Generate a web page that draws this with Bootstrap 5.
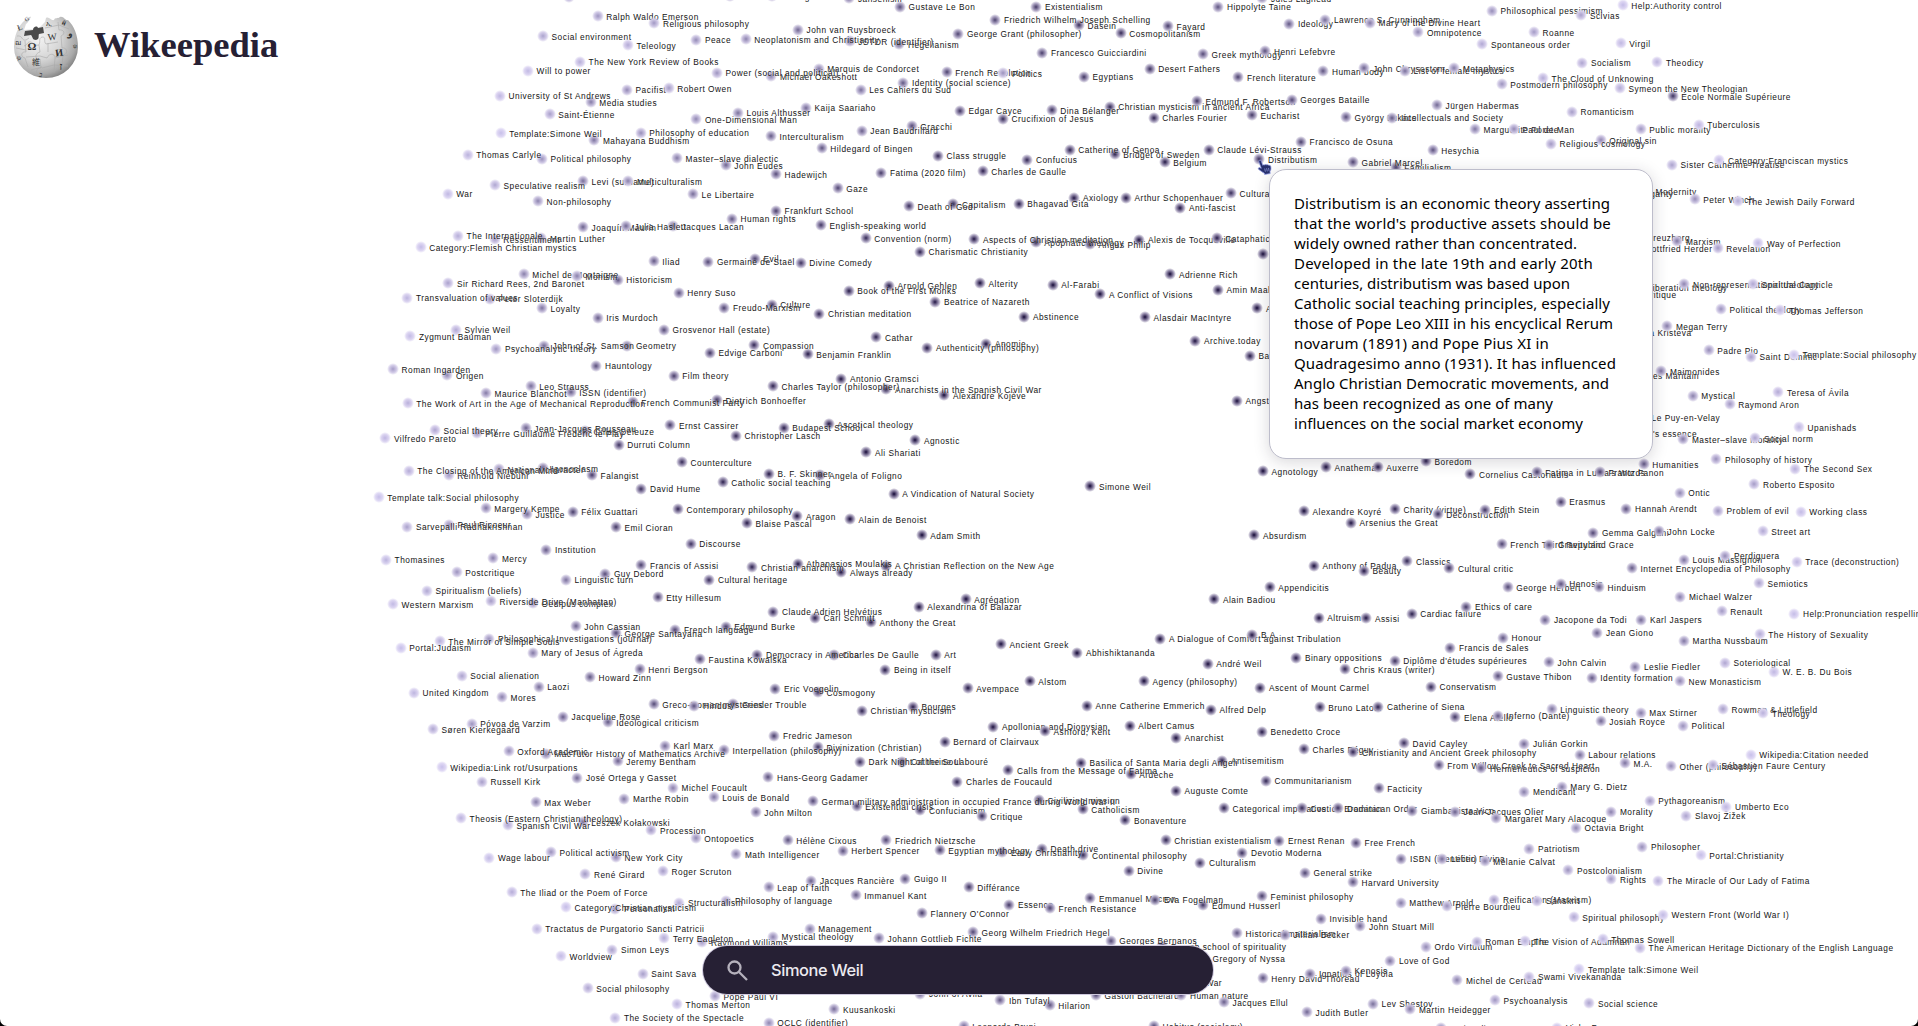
<!DOCTYPE html>
<html lang="en">
<head>
<meta charset="utf-8">
<meta name="viewport" content="width=device-width, initial-scale=1">
<title>Wikeepedia</title>
<link href="https://cdn.jsdelivr.net/npm/bootstrap@5.3.0/dist/css/bootstrap.min.css" rel="stylesheet">
<style>
  body { background: #000; }
  .graph-stage { background: #fff; border-radius: 0 0 7px 7px; }
  .node { position: absolute; display: flex; align-items: center; height: 12px; margin: -6px 0 0 -6px; white-space: nowrap; }
  .node-dot { flex: none; width: 12px; height: 12px; border-radius: 50%;
    background: radial-gradient(circle closest-side, var(--tone) 10%, var(--soft) 62%, rgba(255,255,255,.15) 100%); }
  .node-name { margin-left: 2.6px; padding-top: 1.4px; font: 8.3px/10px "Liberation Sans", sans-serif; letter-spacing: .52px; color: #141414;
    text-shadow: 0 0 1.5px #fff; }
  .brand { padding: 14px 0 0 14px; }
  .brand-name { font: bold 36.6px/44px "Liberation Serif", serif; color: #262034; margin: -4px 0 0 15px; }
  .summary { position: absolute; left: 1269px; top: 169px; width: 384px; height: 290px; padding: 23px 0 0 24px; border-radius: 17px;
    border: 1px solid #bdbdcb; box-shadow: 0 3px 16px rgba(38,32,52,.18); background: #fff; color: #000;
    font: 15px/20px "Noto Sans", sans-serif; white-space: nowrap; }
  .summary span { display: block; }
  .pointer { position: absolute; left: 1256px; top: 158px; }
  .search-bar { height: 48px; width: 510px; background: #262034; border-radius: 24px; margin: 0 0 32px 703px; padding-left: 24px; box-shadow: 0 0 0 1px #cfc9de; }
  .search-bar input { background: none; border: 0; outline: 0; color: #eceaf0; font: 500 16.4px/20px Inter, sans-serif; letter-spacing: -.4px; margin-left: 23px; padding: 0; }
</style>
</head>
<body class="vh-100 overflow-hidden">
<main class="graph-stage position-relative d-flex flex-column justify-content-between vh-100 w-100 overflow-hidden">
  <div id="nodes" class="position-absolute top-0 start-0"></div>

  <header class="brand d-flex align-items-center align-self-start position-relative">
    <svg width="65" height="66" viewBox="0 0 65 66" aria-label="Puzzle globe">
      <defs>
        <radialGradient id="globe" cx=".38" cy=".35" r=".72">
          <stop offset="0" stop-color="#f4f4f4"/><stop offset=".5" stop-color="#d5d5d5"/><stop offset=".82" stop-color="#a9a9a9"/><stop offset="1" stop-color="#777"/>
        </radialGradient>
      </defs>
      <path fill="url(#globe)" d="M17 3c-2-1-4 2-6 3C4 12 0 22 0 33a32 31 0 0 0 64 0C64 21 60 12 54 6c-3 1-4-4-8-3-2 2-5 0-6 3-3 1-5-4-8-2l-1 4-5 5-7 2-9 1 2-6c2-1 3-4 5-7Z"/>
      <path fill="#4b4b4b" d="M11 17l8-1c0-3 4-5 5-2l5-1 1 6-5 1c-1 2 1 5-3 6-4 0-3-3-5-5l-7 1Z"/>
      <g fill="none" stroke="#aaa" stroke-width=".6">
        <path d="M3 22c6-1 4 5 9 4l3-2M10 32c4-1 3-5 7-4 4 2 2 4 8 3 2-5-1-6 3-8 5 0 1 4 4 7l12-2M25 31l1 7c-5 1-6 8 0 7l1 9c-5 0-6 4-2 8M11 27l1 11c-5-1-6 5-1 6l3 9M12 43l14-1 7 2c2-5 8-5 8 0l13-3M44 8l1 8c5-1 7 4 2 6l1 12c6-1 6 7 1 7l-1 12M28 54l12-3 14 1M31 14l14-3 10 4M34 29v9M53 21l8 4M2 34l10 2M17 56l11-3M41 44l-1 15"/>
      </g>
      <g fill="#303030" font-family="Liberation Serif, serif" text-anchor="middle">
        <text x="18" y="36" font-size="11" font-weight="bold">Ω</text>
        <text x="38" y="26" font-size="9.500" transform="rotate(-5 38 22)">W</text>
        <text x="45" y="42" font-size="10" font-weight="bold" transform="rotate(-8 45 38)">И</text>
        <text x="22" y="51" font-size="8" font-family="Noto Sans CJK JP, sans-serif">維</text>
        <text x="47" y="56" font-size="10" font-weight="bold">ז</text>
        <text x="6" y="16" font-size="8" transform="rotate(-22 6 14)">Ł</text>
        <text x="4" y="31" font-size="7">ฌ</text>
        <text x="5" y="46" font-size="7" transform="rotate(22 5 44)">ψ</text>
        <text x="27" y="63" font-size="7" transform="rotate(15 27 60)">ב</text>
        <text x="56" y="22" font-size="9" font-weight="bold" transform="rotate(12 56 20)">و</text>
        <text x="35" y="12" font-size="7">ኢ</text>
        <text x="50" y="11" font-size="7" font-weight="bold" transform="rotate(25 50 9)">й</text>
        <text x="61" y="34" font-size="6">ψ</text>
        <text x="13" y="7" font-size="6" transform="rotate(-35 13 5)">G</text>
      </g>
    </svg>
    <h1 class="brand-name">Wikeepedia</h1>
  </header>

  <aside class="summary" id="summary"></aside>

  <svg class="pointer" width="17" height="18" viewBox="0 0 17 18">
    <path fill="#28306c" stroke="#8f9be6" stroke-width=".7" stroke-linejoin="round" d="M3.300 2.400C4.200 1.800 5 2.300 5.300 3.200L6.800 7.300C7.200 6.500 8.400 6.500 8.800 7.100C9.300 6.400 10.500 6.500 10.900 7C11.500 6.500 12.600 6.700 12.900 7.400C13.800 7.100 14.600 7.700 14.800 8.600C15.300 10.600 14.900 12.300 14 13.600L14.200 15.600L8.600 16.500L8.200 15C6.500 14.300 4.600 12.700 2.700 11.400C1.700 10.500 2.700 9.300 3.900 9.700L5.300 10.300L3 4.300C2.700 3.500 2.700 2.800 3.300 2.400Z"/>
    <path stroke="#98a3e8" stroke-width=".7" d="M8.700 10.500l.7 3.200M10.600 10.200l.7 3.200M12.500 9.900l.6 3.200"/>
  </svg>

  <div class="search-bar d-flex align-items-center position-relative">
    <svg width="21" height="21" viewBox="0 0 21 21" fill="none" stroke="#b5b1bc" stroke-width="2.300"><circle cx="7.500" cy="7.500" r="6"/><path d="M12 12l8 8"/></svg>
    <input type="text" value="Simone Weil" aria-label="Search">
  </div>
</main>

<script src="https://cdn.jsdelivr.net/npm/bootstrap@5.3.0/dist/js/bootstrap.bundle.min.js"></script>
<script>
// The map is stored in sectors: an origin in pixels, then one "x y name" row per article in thirds of a pixel.
const sectors = [
[370, 0, `
597 -11 Pontius Pilate
1080 -12 Nietzsche
1205 -12 Neologism
1437 -7 Jansenism
682 48 Ralph Waldo Emerson
852 68 Religious philosophy
1283 88 John van Ruysbroeck
518 108 Social environment
978 118 Peace
1126 116 Neoplatonism and Christianity
1438 122 JSTOR (identifier)
773 134 Teleology
629 184 The New York Review of Books
473 211 Will to power
1345 205 Marquis de Condorcet
1040 217 Power (social and political)
1203 227 Michael Oakeshott
770 268 Pacifist
895 263 Robert Owen
1471 268 Les Cahiers du Sud
389 286 University of St Andrews
661 305 Media studies
1307 322 Kaija Saariaho
538 341 Saint-Étienne
1103 337 Louis Althusser
978 356 One-Dimensional Man
391 398 Template:Simone Weil
811 397 Philosophy of education
1474 391 Jean Baudrillard
672 419 Mahayana Buddhism
1202 408 Interculturalism
1354 444 Hildegard of Bingen
292 463 Thomas Carlyle
515 475 Political philosophy
920 473 Master–slave dialectic
1066 495 John Eudes
1217 521 Hadewijch
1533 517 Fatima (2020 film)
638 543 Levi (surname)
774 542 Multiculturalism
374 555 Speculative realism
1402 563 Gaze
232 580 War
503 602 Non-philosophy
968 582 Le Libertaire
1217 631 Frankfurt School
1085 655 Human rights
1352 674 English-speaking world
638 680 Joaquín Maurín
767 677 Julia Haslett
908 677 Jacques Lacan
263 706 The Internationale
373 716 Ressentiment
513 713 Martin Luther
1486 713 Convention (norm)
151 740 Category:Flemish Christian mystics
850 783 Iliad
1014 784 Germaine de Staël
1154 775 Evil
1291 787 Divine Comedy
460 821 Michel de Montaigne
620 827 Monism
742 838 Historicism
234 848 Sir Richard Rees, 2nd Baronet
925 877 Henry Suso
1435 871 Book of the First Monks
1556 856 Arnold Gehlen
111 892 Transvaluation of values
359 895 Peter Sloterdijk
515 923 Loyalty
1062 922 Freudo-Marxism
1204 913 Culture
1347 940 Christian meditation
682 952 Iris Murdoch
257 988 Sylvie Weil
881 988 Grosvenor Hall (estate)
120 1008 Zygmunt Bauman
1518 1010 Cathar`],
[880, 0, `
59 19 Gustave Le Bon
468 19 Existentialism
1014 19 Hippolyte Taine
1146 -6 Jules Lagneau
345 58 Friedrich Wilhelm Joseph Schelling
596 75 Dasein
863 78 Fayard
1227 70 Ideology
1335 58 Lawrence S. Cunningham
1469 67 Mary of the Divine Heart
234 100 George Grant (philosopher)
721 98 Cosmopolitanism
57 131 Hegelianism
486 157 Francesco Guicciardini
968 162 Greek mythology
1155 152 Henri Lefebvre
808 205 Desert Fathers
199 216 French Revolution
369 218 Politics
69 247 Identity (social science)
611 229 Egyptians
1074 230 French literature
1329 212 Human body
1452 203 John Chrysostom
950 303 Edmund F. Robertson
1234 298 Georges Bataille
688 319 Christian mysticism in ancient Africa
239 331 Edgar Cayce
514 329 Dina Bélanger
368 355 Crucifixion of Jesus
820 352 Charles Fourier
1115 344 Eucharist
1397 350 György Lukács
1536 352 Intellectuals and Society
94 377 Gracchi
1262 424 Francisco de Osuna
173 466 Class struggle
568 448 Catherine of Genoa
985 448 Claude Lévi-Strauss
441 478 Confucius
703 461 Bridget of Sweden
853 485 Belgium
1137 476 Distributism
1418 485 Gabriel Marcel
1546 500 Familialism
307 512 Charles de Gaulle
86 617 Death of God
219 611 Capitalism
415 610 Bhagavad Gita
582 592 Axiology
737 592 Arthur Schopenhauer
1052 578 Cultural Marxism
900 622 Anti-fascist
282 716 Aspects of Christian meditation
466 725 Apophatic theology
629 732 Angus Philip
777 718 Alexis de Tocqueville
1009 713 Cataphatic theology
119 754 Charismatic Christianity
1149 761 Allegory
870 821 Adrienne Rich
299 848 Alterity
517 853 Al-Farabi
660 881 A Conflict of Visions
1013 868 Amin Maalouf
165 904 Beatrice of Nazareth
1131 924 Aesthetics
432 949 Abstinence
794 950 Alasdair MacIntyre
945 1021 Archive.today`],
[1398, 0, `
673 14 Help:Authority control
281 31 Philosophical pessimism
549 44 Scivias
60 95 Omnipotence
407 95 Roanne
252 131 Spontaneous order
667 128 Virgil
552 187 Socialism
777 185 Theodicy
168 203 Metaphysics
20 211 List of female mystics
434 233 The Cloud of Unknowing
310 251 Postmodern philosophy
665 263 Symeon the New Theologian
823 287 École Normale Supérieure
116 314 Jürgen Habermas
521 334 Romanticism
901 373 Tuberculosis
230 386 Marguerite Porete
346 386 Paul de Man
727 386 Public morality
607 419 Original sin
458 430 Religious cosmology
103 449 Hesychia
963 479 Category:Franciscan mystics
821 493 Sister Catherine Treatise
746 572 Modernity
690 580 Vulgarity
889 596 Peter Winch
1020 602 The Jewish Daily Forward
721 711 Kreuzberg
837 722 Marxism
614 743 Johann Gottfried Herder
958 743 Revelation
1080 728 Way of Perfection
858 851 Non-representational theology
1064 851 Spiritual Canticle
722 860 Liberation theology
711 882 Critique
968 926 Political theology
1146 929 Thomas Jefferson
807 977 Megan Terry
684 995 Julia Kristeva`],
[370, 340, `
378 25 Psychoanalytic theory
521 16 John of St. Samson
771 16 Geometry
1152 14 Compassion
1019 37 Edvige Carboni
1312 41 Benjamin Franklin
68 86 Roman Ingarden
231 104 Origen
678 76 Hauntology
910 106 Film theory
481 137 Leo Strauss
1413 115 Antonio Gramsci
1208 137 Charles Taylor (philosopher)
347 158 Maurice Blanchot
601 155 ISSN (identifier)
1548 147 Anarchists in the Spanish Civil War
112 188 The Work of Art in the Age of Mechanical Reproduction
787 185 French Communist Party
1040 179 Dietrich Bonhoeffer
194 269 Social theory
466 263 Jean-Jacques Rousseau
319 279 Pierre Guillaume Frédéric le Play
644 272 Gilles Deleuze
900 254 Ernst Cassirer
1240 262 Budapest School
1375 251 Ascetical theology
45 293 Vilfredo Pareto
1097 286 Christopher Lasch
745 313 Durruti Column
1488 335 Ali Shariati
935 366 Counterculture
115 391 The Closing of the American Mind
235 405 Reinhold Niebuhr
386 386 National character
517 384 Iconoclasm
665 404 Falangist
1196 400 B. F. Skinner
1350 404 Angela of Foligno
1057 425 Catholic social teaching
813 445 David Hume
25 470 Template talk:Social philosophy
1570 460 A Vindication of Natural Society
346 503 Margery Kempe
470 521 Justice
607 514 Félix Guattari
923 506 Contemporary philosophy
1281 527 Aragon
1130 548 Blaise Pascal
1439 536 Alain de Benoist
111 559 Sarvepalli Radhakrishnan
236 553 Paul Ricoeur
737 560 Emil Cioran
961 610 Discourse
528 628 Institution
47 658 Thomasines
369 653 Mercy
813 674 Francis of Assisi
1146 680 Christian anarchism
1282 670 Athanasios Moulakis
1548 676 A Christian Reflection on the New Age
259 695 Postcritique
705 700 Guy Debord
1413 696 Always already
587 718 Linguistic turn
1017 718 Cultural heritage
170 751 Spiritualism (beliefs)
68 791 Western Marxism
362 782 Riverside Drive (Manhattan)
488 789 Oedipus complex
862 770 Etty Hillesum
1209 814 Claude Adrien Helvétius
1334 832 Carl Schmitt
1502 845 Anthony the Great
616 857 John Cassian
1066 859 Edmund Burke
915 868 French language
737 878 George Santayana
357 895 Philosophical Investigations (journal)
208 902 The Mirror of Simple Souls
91 922 Portal:Judaism
487 937 Mary of Jesus of Ágreda
989 956 Faustina Kowalska
1161 943 Democracy in America
1391 943 Charles De Gaulle
274 1006 Social alienation
808 986 Henri Bergson
1545 988 Being in itself
659 1010 Howard Zinn`],
[880, 340, `
141 22 Authenticity (philosophy)
318 10 Anomie
1109 46 Basilica
192 164 Alexandre Kojève
1070 181 Angst
105 300 Agnostic
1148 392 Agnotology
1337 381 Anathema
1492 380 Auxerre
630 437 Simone Weil
1271 512 Alexandre Koyré
1544 506 Charity (virtue)
1412 547 Arsenius the Great
124 584 Adam Smith
1122 584 Absurdism
1301 676 Anthony of Padua
1451 691 Beauty
1168 740 Appendicitis
1002 776 Alain Badiou
256 777 Agrégation
115 799 Alexandrina of Balazar
1315 832 Altruism
1458 834 Assisi
840 895 A Dialogue of Comfort against Tribulation
1116 883 B.A.
362 911 Ancient Greek
591 937 Abhishiktananda
166 943 Art
982 970 André Weil
1248 952 Binary oppositions
1543 961 Diplôme d'études supérieures
1393 986 Chris Kraus (writer)
448 1022 Alstom
791 1022 Agency (philosophy)`],
[1398, 340, `
931 29 Padre Pio
1058 49 Saint Dominic
1187 43 Template:Social philosophy
789 92 Maimonides
664 104 Jacques Maritain
883 166 Mystical
1140 155 Teresa of Ávila
994 191 Raymond Aron
734 230 Le Puy-en-Velay
1202 260 Upanishads
685 279 Man's essence
855 296 Master–slave morality
1071 293 Social norm
954 356 Philosophy of history
83 363 Boredom
736 371 Humanities
1191 385 The Second Sex
216 401 Cornelius Castoriadis
415 395 Fatima in Lucia's Words
605 395 Frantz Fanon
1068 431 Roberto Esposito
844 457 Ontic
487 484 Erasmus
684 505 Hannah Arendt
118 521 Deconstruction
261 508 Edith Stein
959 511 Problem of evil
1207 514 Working class
585 577 Gemma Galgani
782 572 John Locke
1093 572 Street art
310 611 French Third Republic
453 613 Gravity and Grace
27 662 Classics
153 683 Cultural critic
857 658 Louis Massignon
981 646 Perdiguera
1195 664 Trace (deconstruction)
701 683 Internet Encyclopedia of Philosophy
328 740 George Herbert
487 730 Henosis
602 740 Hinduism
1082 728 Semiotics
846 769 Michael Walzer
40 820 Cardiac failure
204 799 Ethics of care
970 812 Renault
1188 820 Help:Pronunciation respelling key
441 838 Jacopone da Todi
729 838 Karl Jaspers
597 877 Jean Giono
1084 881 The History of Sexuality
314 892 Honour
857 901 Martha Nussbaum
156 922 Francis de Sales
452 965 John Calvin
980 967 Soteriological
711 979 Leslie Fiedler
1127 994 W. E. B. Du Bois
298 1007 Gustave Thibon
580 1012 Identity formation
845 1022 New Monasticism`],
[370, 680, `
505 19 Laozi
131 37 United Kingdom
395 50 Mores
1215 25 Eric Voegelin
1343 35 Cosmogony
850 71 Greco-Roman mysteries
972 76 Hindus
1089 71 Gender Trouble
1475 91 Christian mysticism
578 109 Jacqueline Rose
712 125 Ideological criticism
304 130 Póvoa de Varzim
188 146 Søren Kierkegaard
1212 166 Fredric Jameson
884 196 Karl Marx
415 212 Oxford Academic
526 220 MacTutor History of Mathematics Archive
1061 209 Interpellation (philosophy)
1343 200 Divinization (Christian)
742 243 Jeremy Bentham
1469 244 Dark Night of the Soul
214 260 Wikipedia:Link rot/Usurpations
621 292 José Ortega y Gasset
1194 290 Hans-Georg Gadamer
335 304 Russell Kirk
908 322 Michel Foucault
1030 350 Louis de Bonald
1328 362 German military administration in occupied France during World War II
762 355 Marthe Robin
496 365 Max Weber
1459 377 Existential crisis
1156 395 John Milton
272 413 Theosis (Eastern Christian theology)
637 425 Leszek Kołakowski
413 434 Spanish Civil War
843 449 Procession
976 473 Ontopoetics
1252 479 Hélène Cixous
1548 479 Friedrich Nietzsche
542 515 Political activism
357 532 Wage labour
737 530 New York City
1098 521 Math Intelligencer
1417 511 Herbert Spencer
645 581 René Girard
878 572 Roger Scruton
424 635 The Iliad or the Poem of Force
1195 620 Leap of faith
1323 601 Jacques Rancière
1456 644 Immanuel Kant
927 667 Structuralism
1068 661 Philosophy of language
587 680 Category:Christian mysticism
735 685 Personalism
499 745 Tractatus de Purgatorio Sancti Patricii
1318 745 Management
882 773 Terry Eagleton
996 785 Raymond Williams
1208 769 Mystical theology
1526 773 Johann Gottlieb Fichte
572 827 Worldview
726 808 Simon Leys
817 880 Saint Sava
652 923 Social philosophy
1034 947 Pope Paul VI
920 971 Thomas Merton
735 1012 The Society of the Spectacle
1392 986 Kuusankoski
1195 1027 OCLC (identifier)`],
[880, 680, `
262 23 Avempace
1140 22 Ascent of Mount Carmel
98 79 Bourges
620 76 Anne Catherine Emmerich
992 88 Alfred Delp
1318 80 Bruno Latour
1494 79 Catherine of Siena
339 139 Apollonian and Dionysian
494 152 Ashford, Kent
748 136 Albert Camus
887 172 Anarchist
1145 154 Benedetto Croce
193 184 Bernard of Clairvaux
1271 206 Charles Péguy
1419 215 Christianity and Ancient Greek philosophy
66 244 Catherine Labouré
602 247 Basilica of Santa Maria degli Angeli
1026 241 Antisemitism
384 269 Calls from the Message of Fatima
751 281 Ardèche
231 304 Charles de Foucauld
1157 301 Communitarianism
887 331 Auguste Comte
1495 323 Facticity
476 359 Civilizing mission
120 389 Confucianism
607 386 Catholicism
304 407 Critique
1031 383 Categorical imperative
1264 383 Costica Bradatan
1374 383 Dominican Order
735 419 Bonaventure
856 479 Christian existentialism
1197 481 Ernest Renan
1427 487 Free French
178 509 Egyptian mythology
366 515 Early Christianity
485 505 Death drive
609 524 Continental philosophy
1086 517 Devotio Moderna
960 547 Culturalism
745 571 Divine
1274 577 General strike
75 595 Guigo II
1418 605 Harvard University
265 620 Différance
1145 647 Feminist philosophy
387 673 Essence
509 683 French Resistance
630 653 Emmanuel Macron
825 658 Eva Fogelman
969 674 Edmund Husserl
125 698 Flannery O'Connor
1322 715 Invisible hand
1440 738 John Stuart Mill
278 755 Georg Wilhelm Friedrich Hegel
1070 758 Historical materialism
1214 763 Jillian Becker
691 781 Georges Bernanos
846 798 French school of spirituality
971 833 Gregory of Nyssa
890 905 Gulf War
1530 841 Love of God
1147 893 Henry David Thoreau
1290 880 Ignatius of Loyola
1397 871 Kenosis
120 940 John of Avila
360 959 Ibn Tufayl
508 974 Hilarion
647 944 Gaston Bachelard
903 944 Human nature
1031 965 Jacques Ellul
1280 995 Judith Butler
1478 970 Lev Shestov
250 1037 Leonardo Bruni
821 1037 Habitus (sociology)`],
[1398, 680, `
98 19 Conservatism
171 110 Elena Aiello
298 106 Inferno (Dante)
460 86 Linguistic theory
727 97 Max Stirner
974 86 Rowman & Littlefield
1095 98 Theology
607 122 Josiah Royce
854 136 Political
17 188 David Cayley
378 190 Julián Gorkin
544 223 Labour relations
1057 223 Wikipedia:Citation needed
121 254 From Willow Creek to Sacred Heart
249 263 Hermeneutics of suspicion
680 248 M.A.
818 257 Other (philosophy)
944 254 Sébastien Faure Century
378 334 Mendicant
490 319 Mary G. Dietz
754 361 Pythagoreanism
984 379 Umberto Eco
42 391 Giambattista Vico
170 394 Jean-Jacques Olier
294 413 Margaret Mary Alacoque
639 394 Morality
864 406 Slavoj Žižek
533 442 Octavia Bright
393 505 Patriotism
732 499 Philosopher
907 524 Portal:Christianity
9 535 ISBN (identifier)
132 535 Lectio Divina
259 542 Mélanie Calvat
510 569 Postcolonialism
639 596 Rights
780 601 The Miracle of Our Lady of Fatima
7 667 Matthew Arnold
145 677 Pierre Bourdieu
288 658 Reification (Marxism)
417 661 Sanskrit
526 710 Spiritual philosophy
794 703 Western Front (World War I)
83 799 Ordo Virtutum
235 784 Roman Empire
380 782 The Vision of Adamnán
613 776 Thomas Sowell
725 802 The American Heritage Dictionary of the English Language
543 866 Template talk:Simone Weil
177 899 Michel de Certeau
393 889 Swami Vivekananda
290 959 Psychoanalysis
573 968 Social science
36 986 Martin Heidegger
127 1043 Nationalism
477 1042 Vichy France`]
];

const summaryLines = [
  ["Distributism is an economic theory asserting", 316],
  ["that the world's productive assets should be", 317],
  ["widely owned rather than concentrated.", 283],
  ["Developed in the late 19th and early 20th", 299],
  ["centuries, distributism was based upon", 276],
  ["Catholic social teaching principles, especially", 316],
  ["those of Pope Leo XIII in his encyclical Rerum", 319],
  ["novarum (1891) and Pope Pius XI in", 255],
  ["Quadragesimo anno (1931). It has influenced", 322],
  ["Anglo Christian Democratic movements, and", 315],
  ["has been recognized as one of many", 259],
  ["influences on the social market economy", 289]
];

// Articles run in alphabetical order with namespace pages last; later ones are paler and lie on top.
const isNamespace = n => /^(Category|Help|Portal|Template|Template talk|Wikipedia):/.test(n);
const nodes = sectors.flatMap(([ox, oy, rows]) => rows.trim().split("\n").map(row => {
  const [, x, y, name] = row.match(/^(-?\d+) (-?\d+) (.+)$/);
  return { x: ox + x / 3 + .3, y: oy + y / 3 + .2, name };
})).sort((a, b) => isNamespace(a.name) - isNamespace(b.name) || a.name.localeCompare(b.name));

const mix = (a, b, t) => a.map((v, i) => Math.round(v + (b[i] - v) * t));
const layer = document.getElementById("nodes");
nodes.forEach((n, i) => {
  const t = n.name === "Simone Weil" ? 0 : (i / nodes.length) ** 1.15;
  const tone = mix([40, 28, 72], [204, 196, 236], t);
  const el = document.createElement("div");
  el.className = "node";
  el.style.cssText = `left:${n.x}px;top:${n.y}px;--tone:rgb(${tone});--soft:rgb(${mix(tone, [236, 230, 250], .6)})`;
  el.innerHTML = '<span class="node-dot"></span><span class="node-name"></span>';
  el.lastChild.textContent = n.name;
  layer.append(el);
});

// Spread each summary line to its measure.
const summary = document.getElementById("summary");
for (const [text, measure] of summaryLines) {
  const line = document.createElement("span");
  line.textContent = text;
  line.style.width = "max-content";
  summary.append(line);
  line.style.letterSpacing = (measure - line.getBoundingClientRect().width) / text.length + "px";
}
</script>
</body>
</html>
